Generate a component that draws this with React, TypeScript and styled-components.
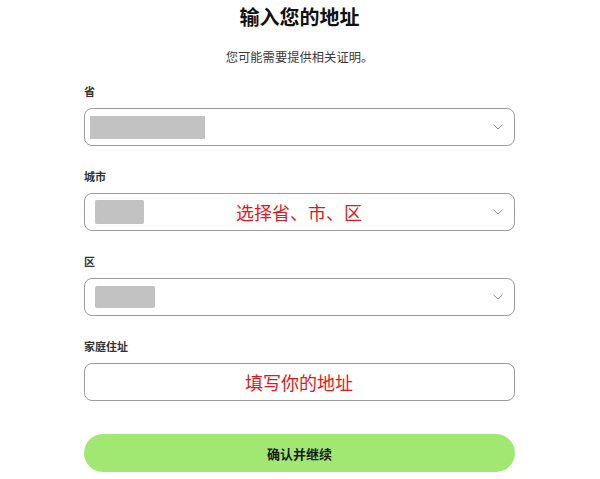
import React from "react";
import styled, { createGlobalStyle } from "styled-components";

const Global = createGlobalStyle`
  html, body { margin: 0; padding: 0; background: #ffffff; }
  body { font-family: "Noto Sans CJK SC", "Noto Sans", sans-serif; color: #1a1a1a; }
`;

const Page = styled.main`
  width: 431px;
  margin: 0 85px 0 84px;
  padding-top: 5px;
  display: flex;
  flex-direction: column;
`;

const Title = styled.h1`
  margin: 0;
  font-size: 20px;
  line-height: 24px;
  font-weight: 700;
  text-align: center;
  color: #111111;
`;

const Subtitle = styled.p`
  margin: 20px 0 0;
  font-size: 12.3px;
  line-height: 16px;
  text-align: center;
  color: #3a3a3a;
`;

const Form = styled.form`
  margin-top: 19px;
  display: flex;
  flex-direction: column;
  gap: 23px;
`;

const Group = styled.div`
  display: flex;
  flex-direction: column;
  gap: 10px;
`;

const Label = styled.label`
  font-size: 11px;
  line-height: 14px;
  font-weight: 700;
  color: #333333;
`;

const Box = styled.div`
  box-sizing: border-box;
  height: 38px;
  border: 1px solid #9c9c9c;
  border-radius: 8px;
  display: grid;
  grid-template-columns: 1fr auto 1fr;
  align-items: center;
  padding: 0 11px 0 var(--pad, 10px);
`;

const Blur = styled.span<{ $w: number; $h: number; $r: number }>`
  justify-self: start;
  display: block;
  width: ${(p) => p.$w}px;
  height: ${(p) => p.$h}px;
  border-radius: ${(p) => p.$r}px;
  background: #c2c2c2;
`;

const Note = styled.span`
  grid-column: 2;
  font-size: 18px;
  line-height: 22px;
  color: #e2161c;
  white-space: nowrap;
`;

const Chevron = styled.svg`
  grid-column: 3;
  justify-self: end;
  width: 10px;
  height: 6px;
`;

const Submit = styled.button`
  margin-top: 33px;
  height: 38px;
  border: none;
  border-radius: 19px;
  background: #a1e873;
  font-family: "Noto Sans CJK SC", "Noto Sans", sans-serif;
  font-size: 13px;
  font-weight: 700;
  color: #1a1a1a;
  cursor: pointer;
`;

const Arrow = () => (
  <Chevron viewBox="0 0 10 6">
    <path d="M0.5 0.8 L5 5 L9.5 0.8" fill="none" stroke="#8a8a8a" strokeWidth="1" />
  </Chevron>
);

type SelectProps = {
  label: string;
  w: number;
  h: number;
  r: number;
  pad: number;
  note?: string;
};

const SelectField = ({ label, w, h, r, pad, note }: SelectProps) => (
  <Group>
    <Label>{label}</Label>
    <Box style={{ ["--pad" as string]: `${pad}px` } as React.CSSProperties}>
      <Blur $w={w} $h={h} $r={r} />
      {note ? <Note>{note}</Note> : null}
      <Arrow />
    </Box>
  </Group>
);

export default function App() {
  return (
    <>
      <Global />
      <Page>
        <Title>输入您的地址</Title>
        <Subtitle>您可能需要提供相关证明。</Subtitle>
        <Form onSubmit={(e) => e.preventDefault()}>
          <SelectField label="省" w={115} h={23} r={0} pad={5} />
          <SelectField label="城市" w={49} h={24} r={2} pad={10} note="选择省、市、区" />
          <SelectField label="区" w={60} h={22} r={2} pad={10} />
          <Group>
            <Label>家庭住址</Label>
            <Box>
              <Note>填写你的地址</Note>
            </Box>
          </Group>
        </Form>
        <Submit type="button">确认并继续</Submit>
      </Page>
    </>
  );
}
